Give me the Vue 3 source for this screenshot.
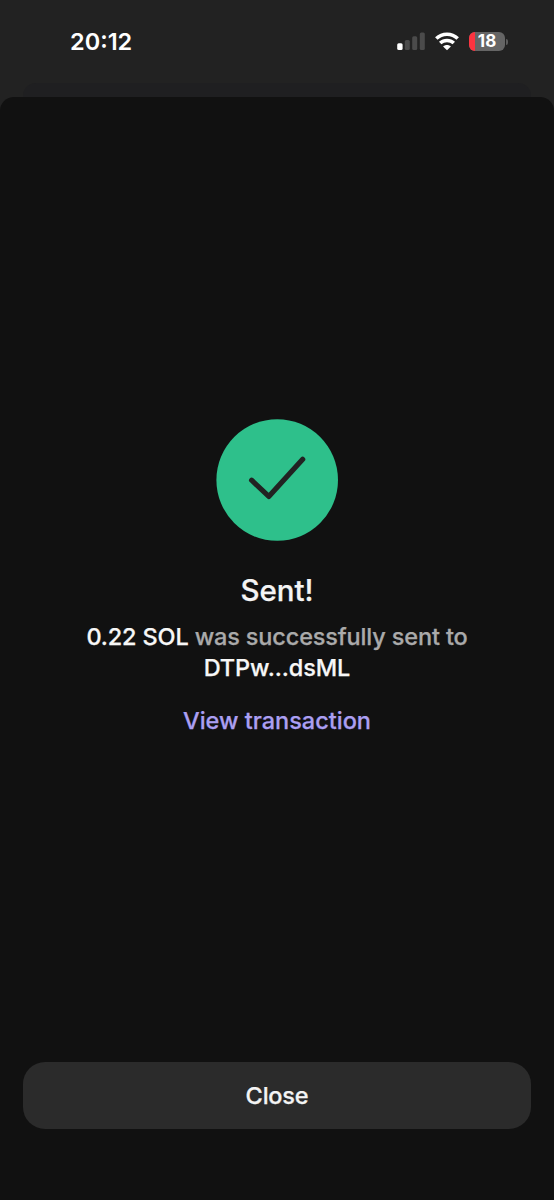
<script setup>
const time = '20:12'
const battery = 18
const amount = '0.22 SOL'
const recipient = 'DTPw...dsML'
</script>

<template>
  <div class="screen">
    <header class="status">
      <span class="time">{{ time }}</span>
      <div class="indicators">
        <svg class="signal" width="28" height="19" viewBox="0 0 28 19">
          <rect x="0.2" y="11.2" width="5.4" height="6.8" rx="1.5" fill="#fff" />
          <rect x="7.8" y="8" width="5" height="10" rx="1.5" fill="#4b4b4b" />
          <rect x="15.2" y="4.3" width="5" height="13.7" rx="1.5" fill="#4b4b4b" />
          <rect x="22.8" y="0.5" width="5" height="17.5" rx="1.5" fill="#4b4b4b" />
        </svg>
        <svg class="wifi" width="24" height="19" viewBox="0 0 24 19">
          <g fill="none" stroke="#fff" stroke-width="3.5">
            <path d="M1.3 6.5C7.2 0.7 16.8 0.7 22.7 6.5" />
            <path d="M5.2 11.1C9 7.5 15 7.5 18.8 11.1" />
          </g>
          <path d="M12 18.2L8.1 14.4C10.3 12.4 13.7 12.4 15.9 14.4Z" fill="#fff" />
        </svg>
        <div class="battery">
          <div class="cell">
            <div class="level" :style="{ width: battery + '%' }"></div>
            <span class="percent">{{ battery }}</span>
          </div>
          <div class="tip"></div>
        </div>
      </div>
    </header>
    <div class="behind"></div>
    <main class="sheet">
      <section class="result">
        <svg class="badge" width="122" height="122" viewBox="0 0 122 122">
          <circle cx="61.2" cy="61" r="60.8" fill="#2ec08b" />
          <path d="M35.6 61.2L52.8 77.4L86.7 40.3" fill="none" stroke="#222" stroke-width="5.2" stroke-linecap="round" stroke-linejoin="round" />
        </svg>
        <h1>Sent!</h1>
        <p><b>{{ amount }}</b> was successfully sent to<br /><b class="address">{{ recipient }}</b></p>
        <a class="link">View transaction</a>
      </section>
      <button class="close">Close</button>
    </main>
  </div>
</template>

<style>
body {
  background: #111;
}
</style>

<style scoped>
.screen {
  display: flex;
  flex-direction: column;
  width: 554px;
  height: 1200px;
  overflow: hidden;
  background: #222;
  color: #f4f4f4;
  font-family: Inter, 'Liberation Sans', sans-serif;
  font-weight: 500;
}
.status {
  display: flex;
  justify-content: space-between;
  align-items: flex-start;
  height: 83px;
  box-sizing: border-box;
  padding: 27px 46px 0 70px;
}
.time {
  font-size: 23.5px;
  line-height: 29px;
  font-weight: 600;
  color: #fff;
}
.indicators {
  display: flex;
  padding-top: 4px;
}
.signal {
  margin-top: 1px;
}
.wifi {
  margin: 1px 10px 0 10px;
}
.battery {
  display: flex;
  align-items: center;
  height: 21px;
}
.cell {
  position: relative;
  width: 36px;
  height: 19px;
  border-radius: 6px;
  overflow: hidden;
  background: #656565;
}
.level {
  height: 100%;
  background: #fb3440;
}
.percent {
  position: absolute;
  inset: 0;
  text-align: center;
  font-size: 17px;
  line-height: 19px;
  font-weight: 700;
  color: #fff;
}
.tip {
  width: 2px;
  height: 6px;
  margin-left: 1px;
  border-radius: 0 2px 2px 0;
  background: #5c5c5c;
}
.behind {
  flex: none;
  height: 14px;
  margin: 0 23px;
  border-radius: 13px 13px 0 0;
  background: #1f1f21;
}
.sheet {
  flex: 1;
  display: flex;
  flex-direction: column;
  padding: 0 23px 71px;
  border-radius: 14px 14px 0 0;
  background: #111;
}
.result {
  flex: 1;
  display: flex;
  flex-direction: column;
  align-items: center;
  padding-top: 322px;
  text-align: center;
  -webkit-text-stroke: 0.25px currentColor;
}
.badge {
  display: block;
}
h1 {
  margin: 31px 0 0;
  font-size: 29.5px;
  line-height: 36px;
  font-weight: 500;
}
p {
  margin: 13px 0 0;
  font-size: 23.5px;
  line-height: 31px;
  letter-spacing: -0.15px;
  color: #aaa;
  white-space: nowrap;
}
b {
  font-weight: 500;
  color: #f7f7f7;
}
.address {
  letter-spacing: -0.1px;
}
.link {
  margin-top: 22px;
  font-size: 23.5px;
  line-height: 31px;
  color: #ab9ff2;
}
.close {
  height: 67px;
  padding: 0;
  border: 0;
  border-radius: 22px;
  background: #2b2b2b;
  color: #f4f4f4;
  font: 500 23.5px/31px Inter, 'Liberation Sans', sans-serif;
  letter-spacing: -0.2px;
  -webkit-text-stroke: 0.25px currentColor;
}
</style>
